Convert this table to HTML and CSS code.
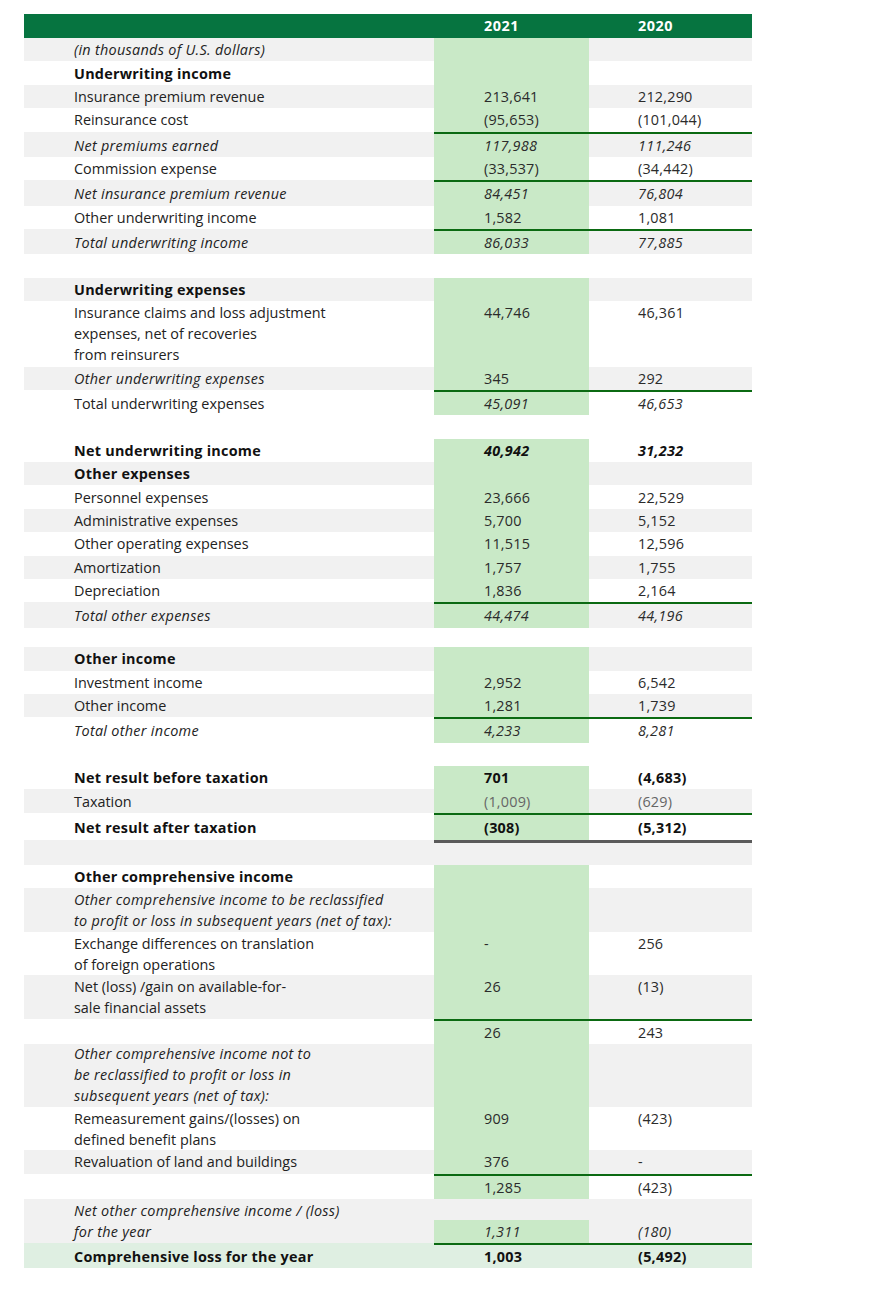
FILE: index.html
```html
<!DOCTYPE html>
<html lang="en">
<head>
<meta charset="utf-8">
<title>Statement of comprehensive income</title>
<link rel="stylesheet" href="styles.css">
</head>
<body>
<div class="statement">
  <div class="row head"><div class="lab"></div><div class="v">2021</div><div class="v">2020</div></div>

  <div class="row alt"><div class="lab it">(in thousands of U.S. dollars)</div><div class="v y1"></div><div class="v"></div></div>
  <div class="row"><div class="lab b">Underwriting income</div><div class="v y1"></div><div class="v"></div></div>
  <div class="row alt"><div class="lab">Insurance premium revenue</div><div class="v y1">213,641</div><div class="v">212,290</div></div>
  <div class="row"><div class="lab">Reinsurance cost</div><div class="v y1">(95,653)</div><div class="v">(101,044)</div></div>
  <div class="row alt rule"><div class="lab it">Net premiums earned</div><div class="v y1 it">117,988</div><div class="v it">111,246</div></div>
  <div class="row"><div class="lab">Commission expense</div><div class="v y1">(33,537)</div><div class="v">(34,442)</div></div>
  <div class="row alt rule"><div class="lab it">Net insurance premium revenue</div><div class="v y1 it">84,451</div><div class="v it">76,804</div></div>
  <div class="row"><div class="lab">Other underwriting income</div><div class="v y1">1,582</div><div class="v">1,081</div></div>
  <div class="row alt rule"><div class="lab it">Total underwriting income</div><div class="v y1 it">86,033</div><div class="v it">77,885</div></div>

  <div class="spacer"></div>

  <div class="row alt"><div class="lab b">Underwriting expenses</div><div class="v y1"></div><div class="v"></div></div>
  <div class="row"><div class="lab">Insurance claims and loss adjustment<br>expenses, net of recoveries<br>from reinsurers</div><div class="v y1">44,746</div><div class="v">46,361</div></div>
  <div class="row alt"><div class="lab it">Other underwriting expenses</div><div class="v y1">345</div><div class="v">292</div></div>
  <div class="row rule"><div class="lab">Total underwriting expenses</div><div class="v y1 it">45,091</div><div class="v it">46,653</div></div>

  <div class="spacer"></div>

  <div class="row"><div class="lab b">Net underwriting income</div><div class="v y1 bi">40,942</div><div class="v bi">31,232</div></div>
  <div class="row alt"><div class="lab b">Other expenses</div><div class="v y1"></div><div class="v"></div></div>
  <div class="row"><div class="lab">Personnel expenses</div><div class="v y1">23,666</div><div class="v">22,529</div></div>
  <div class="row alt"><div class="lab">Administrative expenses</div><div class="v y1">5,700</div><div class="v">5,152</div></div>
  <div class="row"><div class="lab">Other operating expenses</div><div class="v y1">11,515</div><div class="v">12,596</div></div>
  <div class="row alt"><div class="lab">Amortization</div><div class="v y1">1,757</div><div class="v">1,755</div></div>
  <div class="row"><div class="lab">Depreciation</div><div class="v y1">1,836</div><div class="v">2,164</div></div>
  <div class="row alt rule"><div class="lab it">Total other expenses</div><div class="v y1 it">44,474</div><div class="v it">44,196</div></div>

  <div class="spacer short"></div>

  <div class="row alt"><div class="lab b">Other income</div><div class="v y1"></div><div class="v"></div></div>
  <div class="row"><div class="lab">Investment income</div><div class="v y1">2,952</div><div class="v">6,542</div></div>
  <div class="row alt"><div class="lab">Other income</div><div class="v y1">1,281</div><div class="v">1,739</div></div>
  <div class="row rule"><div class="lab it">Total other income</div><div class="v y1 it">4,233</div><div class="v it">8,281</div></div>

  <div class="spacer"></div>

  <div class="row"><div class="lab b">Net result before taxation</div><div class="v y1 b">701</div><div class="v b">(4,683)</div></div>
  <div class="row alt"><div class="lab">Taxation</div><div class="v y1 muted">(1,009)</div><div class="v muted">(629)</div></div>
  <div class="row rule tall"><div class="lab b">Net result after taxation</div><div class="v y1 b">(308)</div><div class="v b">(5,312)</div></div>
  <div class="row alt darkrule"><div class="lab"></div><div class="v"></div><div class="v"></div></div>

  <div class="row"><div class="lab b">Other comprehensive income</div><div class="v y1"></div><div class="v"></div></div>
  <div class="row alt ml"><div class="lab it">Other comprehensive income to be reclassified<br>to profit or loss in subsequent years (net of tax):</div><div class="v y1"></div><div class="v"></div></div>
  <div class="row ml"><div class="lab">Exchange differences on translation<br>of foreign operations</div><div class="v y1">-</div><div class="v">256</div></div>
  <div class="row alt ml"><div class="lab">Net (loss) /gain on available-for-<br>sale financial assets</div><div class="v y1">26</div><div class="v">(13)</div></div>
  <div class="row rule"><div class="lab"></div><div class="v y1">26</div><div class="v">243</div></div>
  <div class="row alt tight"><div class="lab it">Other comprehensive income not to<br>be reclassified to profit or loss in<br>subsequent years (net of tax):</div><div class="v y1"></div><div class="v"></div></div>
  <div class="row ml"><div class="lab">Remeasurement gains/(losses) on<br>defined benefit plans</div><div class="v y1">909</div><div class="v">(423)</div></div>
  <div class="row alt"><div class="lab">Revaluation of land and buildings</div><div class="v y1">376</div><div class="v">-</div></div>
  <div class="row rule"><div class="lab"></div><div class="v y1">1,285</div><div class="v">(423)</div></div>
  <div class="row alt ml bottom"><div class="lab it">Net other comprehensive income / (loss)<br>for the year</div><div class="v y1 it">1,311</div><div class="v it">(180)</div></div>
  <div class="row total rule"><div class="lab b">Comprehensive loss for the year</div><div class="v b">1,003</div><div class="v b">(5,492)</div></div>
</div>
</body>
</html>
```

FILE: styles.css
```css
html, body {
  margin: 0;
  padding: 0;
  background: #ffffff;
}

body {
  font-family: "Open Sans", "Noto Sans", "Liberation Sans", sans-serif;
  font-size: 14.4px;
  color: #2b2b2b;
}

.statement {
  width: 728px;
  margin: 14px 0 0 24px;
}

.row {
  display: grid;
  grid-template-columns: 410px 155px 163px;
  line-height: 21px;
}

.row > div {
  padding-top: 1.2px;
  padding-bottom: 1.2px;
}

.row .lab {
  padding-left: 50px;
  color: #222222;
}

.row .v {
  padding-left: 50px;
  letter-spacing: 0.2px;
}

.row .v:last-child {
  padding-left: 49px;
}

.row.ml > div {
  padding-top: 0.8px;
  padding-bottom: 0.8px;
}

.row.tight > div {
  padding-top: 0;
  padding-bottom: 0;
  line-height: 20.8px;
}

.row.tall > div {
  padding-top: 2.2px;
  padding-bottom: 1.8px;
}

.alt {
  background: #f1f1f1;
}

.y1 {
  background: #c9e9c7;
}

.row.head {
  background: #067440;
  color: #ffffff;
  font-weight: 700;
  font-size: 14.4px;
  line-height: 24px;
}

.row.head > div {
  padding-top: 0;
  padding-bottom: 0;
}

.row.head .v {
  letter-spacing: 0.5px;
}

.rule > div {
  border-top: 2px solid transparent;
}

.rule > .v {
  border-top-color: #0b6a12;
}

.darkrule {
  min-height: 25px;
}

.darkrule > div {
  border-top: 3px solid transparent;
}

.darkrule > .v {
  border-top-color: #5a5a5a;
}

.bottom > .v {
  align-self: end;
}

.total {
  background: #dfefe2;
}

.spacer {
  height: 23.4px;
}

.spacer.short {
  height: 19.5px;
}

.row .it {
  font-style: italic;
  letter-spacing: 0.3px;
}

.row .b {
  font-weight: 700;
  color: #111111;
  letter-spacing: 0.25px;
}

.row .bi {
  font-weight: 700;
  font-style: italic;
  color: #111111;
  letter-spacing: 0.3px;
}

.row .muted {
  color: #666666;
}
```
